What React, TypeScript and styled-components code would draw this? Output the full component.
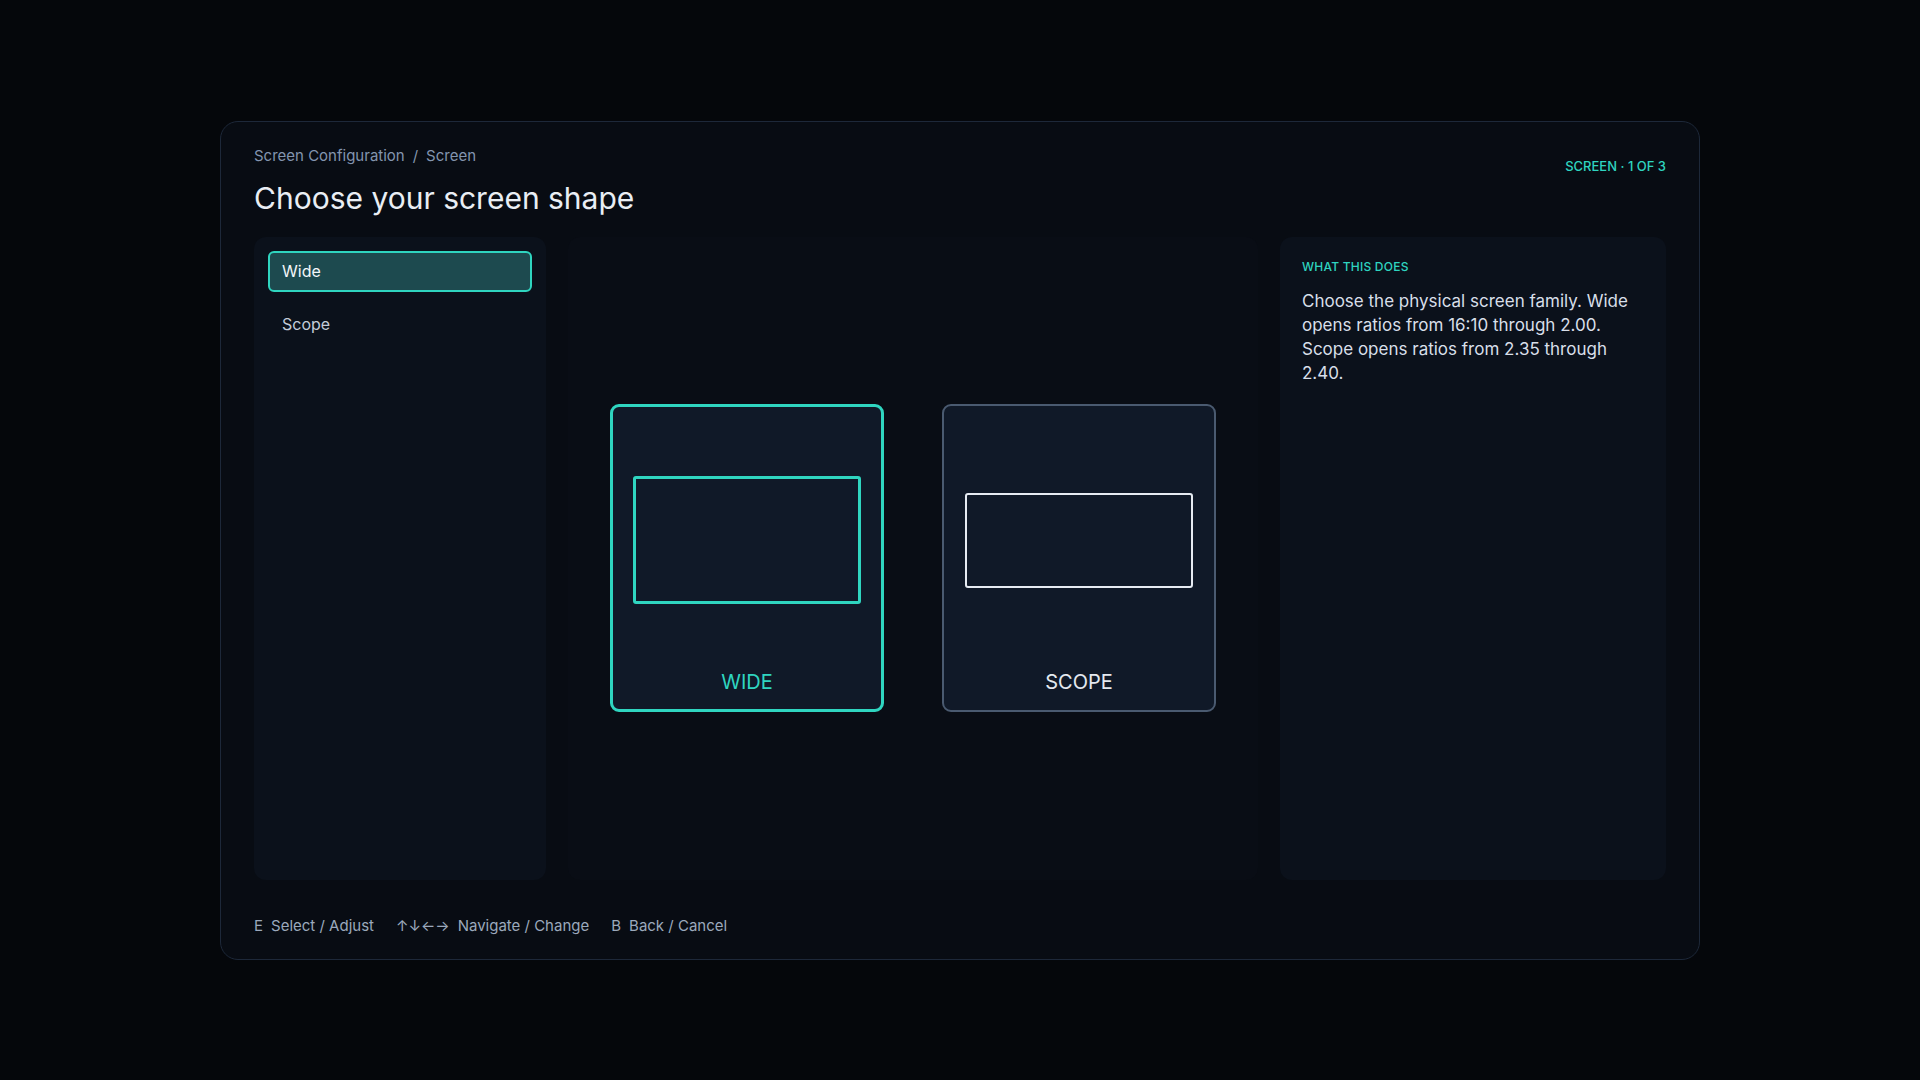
import React from "react";
import styled, { createGlobalStyle } from "styled-components";

const teal = "#2fd5c0";

const GlobalStyle = createGlobalStyle`
  html, body {
    margin: 0;
    padding: 0;
    background: #05070b;
  }

  body {
    font-family: Inter, "Noto Sans", "Liberation Sans", sans-serif;
    -webkit-font-smoothing: antialiased;
  }
`;

const Page = styled.div`
  width: 1920px;
  height: 1080px;
  display: flex;
  align-items: center;
  justify-content: center;
`;

const Shell = styled.div`
  box-sizing: border-box;
  width: 1480px;
  height: 839px;
  display: flex;
  flex-direction: column;
  padding: 24px 33px 23px;
  background: #080c13;
  border: 1px solid #1d2839;
  border-radius: 18px;
`;

const Header = styled.header`
  display: flex;
  justify-content: space-between;
  align-items: flex-start;
`;

const Breadcrumb = styled.nav`
  display: flex;
  gap: 8px;
  font-size: 15px;
  line-height: 20px;
  color: #8395af;
`;

const Title = styled.h1`
  margin: 14px 0 0;
  font-size: 30px;
  line-height: 36px;
  font-weight: 400;
  color: #e9eef4;
`;

const Step = styled.div`
  margin-top: 12px;
  font-size: 13px;
  line-height: 16px;
  font-weight: 500;
  color: ${teal};
`;

const Panels = styled.main`
  flex: 1;
  margin-top: 21px;
  display: grid;
  grid-template-columns: 292px 690px 386px;
  justify-content: space-between;
`;

const Panel = styled.section<{ $dim?: boolean }>`
  box-sizing: border-box;
  border-radius: 12px;
  background: ${(p) => (p.$dim ? "#090d15" : "#0b111b")};
`;

const List = styled(Panel)`
  display: flex;
  flex-direction: column;
  gap: 12px;
  padding: 14px;
`;

const ListItem = styled.div<{ $active?: boolean }>`
  box-sizing: border-box;
  height: 41px;
  display: flex;
  align-items: center;
  padding: 0 12px;
  border-radius: 6px;
  border: 2px solid ${(p) => (p.$active ? teal : "transparent")};
  background: ${(p) => (p.$active ? "#1d4a4f" : "transparent")};
  font-size: 16px;
  color: ${(p) => (p.$active ? "#f3f6f9" : "#c3ccd9")};
`;

const Stage = styled(Panel)`
  display: flex;
  align-items: center;
  justify-content: center;
  gap: 58px;
`;

const ShapeCard = styled.div<{ $active?: boolean }>`
  box-sizing: border-box;
  width: 274px;
  height: 308px;
  display: flex;
  flex-direction: column;
  align-items: center;
  padding: ${(p) => (p.$active ? "20px 20px 15px" : "21px 21px 16px")};
  border: ${(p) => (p.$active ? `3px solid ${teal}` : "2px solid #4a5a70")};
  border-radius: 9px;
  background: #101928;
`;

const Preview = styled.div`
  height: 226px;
  width: 100%;
  display: flex;
  align-items: center;
  justify-content: center;
`;

const Frame = styled.div<{ $ratio: number; $active?: boolean }>`
  box-sizing: border-box;
  width: 228px;
  height: ${(p) => Math.round(228 / p.$ratio)}px;
  border: ${(p) => (p.$active ? `3px solid ${teal}` : "2px solid #e6ebf2")};
  border-radius: 3px;
`;

const ShapeLabel = styled.div<{ $active?: boolean }>`
  margin-top: 17px;
  font-size: 20px;
  line-height: 24px;
  color: ${(p) => (p.$active ? teal : "#e4e9f0")};
`;

const Info = styled(Panel)`
  padding: 22px;
`;

const InfoLabel = styled.div`
  font-size: 12px;
  line-height: 16px;
  font-weight: 500;
  letter-spacing: 0.02em;
  color: ${teal};
`;

const InfoText = styled.p`
  margin: 14px 0 0;
  font-size: 17px;
  line-height: 24px;
  color: #d8dfe9;
`;

const Footer = styled.footer`
  margin-top: 36px;
  display: flex;
  gap: 22px;
  font-size: 15px;
  line-height: 20px;
  color: #9ba9bc;
`;

const Hint = styled.span`
  display: flex;
  gap: 8px;
`;

const shapes = [
  { name: "WIDE", ratio: 1.78, active: true },
  { name: "SCOPE", ratio: 2.39, active: false },
];

const hints = [
  { key: "E", label: "Select / Adjust" },
  { key: "↑↓←→", label: "Navigate / Change" },
  { key: "B", label: "Back / Cancel" },
];

export default function App() {
  return (
    <Page>
      <GlobalStyle />
      <Shell>
        <Header>
          <div>
            <Breadcrumb>
              <span>Screen Configuration</span>
              <span>/</span>
              <span>Screen</span>
            </Breadcrumb>
            <Title>Choose your screen shape</Title>
          </div>
          <Step>SCREEN · 1 OF 3</Step>
        </Header>

        <Panels>
          <List>
            <ListItem $active>Wide</ListItem>
            <ListItem>Scope</ListItem>
          </List>

          <Stage $dim>
            {shapes.map((s) => (
              <ShapeCard key={s.name} $active={s.active}>
                <Preview>
                  <Frame $ratio={s.ratio} $active={s.active} />
                </Preview>
                <ShapeLabel $active={s.active}>{s.name}</ShapeLabel>
              </ShapeCard>
            ))}
          </Stage>

          <Info>
            <InfoLabel>WHAT THIS DOES</InfoLabel>
            <InfoText>
              Choose the physical screen family. Wide opens ratios from 16:10
              through 2.00. Scope opens ratios from 2.35 through 2.40.
            </InfoText>
          </Info>
        </Panels>

        <Footer>
          {hints.map((h) => (
            <Hint key={h.key}>
              <span>{h.key}</span>
              <span>{h.label}</span>
            </Hint>
          ))}
        </Footer>
      </Shell>
    </Page>
  );
}
